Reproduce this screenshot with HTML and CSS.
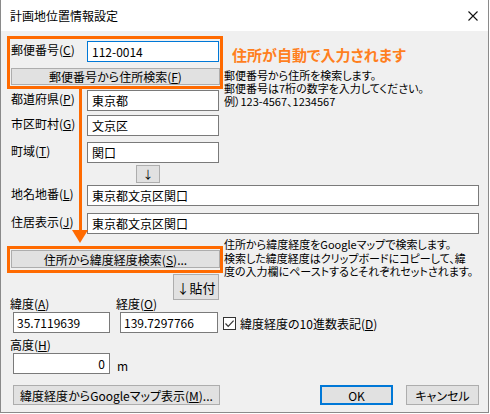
FILE: index.html
```html
<!doctype html>
<html lang="ja">
    <head>
        <meta charset="utf-8">
        <title>計画地位置情報設定</title>
        <link rel="stylesheet" href="styles.css">
    </head>
    <body>
        <div class="window">
            <div class="titlebar">
                <span class="title">計画地位置情報設定</span>
                <svg class="close" width="10" height="10" viewBox="0 0 10 10">
                    <path d="M0.5 0.5 L9.5 9.5 M9.5 0.5 L0.5 9.5" stroke="#111" stroke-width="1.1" fill="none"/>
                </svg>
            </div>
            <div class="content">
                <div class="top">
                    <div class="col-left">
                        <div class="row">
                            <label class="lbl">郵便番号(<u>C</u>)</label>
                            <input class="field field--focus" type="text" value="112-0014">
                        </div>
                        <button class="btn btn-zip">郵便番号から住所検索(<u>F</u>)</button>
                        <div class="row row-pref">
                            <label class="lbl">都道府県(<u>P</u>)</label>
                            <input class="field" type="text" value="東京都">
                        </div>
                        <div class="row row-city">
                            <label class="lbl">市区町村(<u>G</u>)</label>
                            <input class="field" type="text" value="文京区">
                        </div>
                        <div class="row row-town">
                            <label class="lbl">町域(<u>T</u>)</label>
                            <input class="field" type="text" value="関口">
                        </div>
                    </div>
                    <div class="col-right">
                        <p class="notice">住所が自動で入力されます</p>
                        <p class="info info-zip">郵便番号から住所を検索します。<br>郵便番号は7桁の数字を入力してください。<br>例）123-4567、1234567</p>
                    </div>
                </div>
                <button class="btn btn-copy">↓</button>
                <div class="row row-lot">
                    <label class="lbl">地名地番(<u>L</u>)</label>
                    <input class="field field--wide" type="text" value="東京都文京区関口">
                </div>
                <div class="row row-house">
                    <label class="lbl">住居表示(<u>J</u>)</label>
                    <input class="field field--wide" type="text" value="東京都文京区関口">
                </div>
                <div class="geo">
                    <div class="geo-left">
                        <button class="btn btn-geo">住所から緯度経度検索(<u>S</u>)...</button>
                        <button class="btn btn-paste">↓貼付</button>
                    </div>
                    <p class="info info-geo">住所から緯度経度をGoogleマップで検索します。<br>検索した緯度経度はクリップボードにコピーして、緯<br>度の入力欄にペーストするとそれぞれセットされます。</p>
                </div>
                <div class="coords">
                    <div class="coord coord-lat">
                        <label class="coord-lbl">緯度(<u>A</u>)</label>
                        <input class="field field--num" type="text" value="35.7119639">
                    </div>
                    <div class="coord coord-lon">
                        <label class="coord-lbl">経度(<u>O</u>)</label>
                        <input class="field field--num" type="text" value="139.7297766">
                    </div>
                    <label class="check">
                        <span class="check-box">
                            <svg width="11" height="11" viewBox="0 0 11 11"><path d="M1.5 5.5 L4.2 8.3 L9.6 2.6" stroke="#333" stroke-width="1.2" fill="none"/></svg>
                        </span>
                        緯度経度の10進数表記(<u>D</u>)
                    </label>
                </div>
                <div class="coord coord-alt">
                    <label class="coord-lbl">高度(<u>H</u>)</label>
                    <div class="alt-row">
                        <input class="field field--num field--right" type="text" value="0">
                        <span class="unit">m</span>
                    </div>
                </div>
                <div class="actions">
                    <button class="btn btn-map">緯度経度からGoogleマップ表示(<u>M</u>)...</button>
                    <button class="btn btn-ok">OK</button>
                    <button class="btn btn-cancel">キャンセル</button>
                </div>
            </div>
            <div class="mark mark-zip"></div>
            <div class="mark mark-geo"></div>
            <div class="arrow-line"></div>
            <div class="arrow-head"></div>
        </div>
    </body>
</html>
```

FILE: styles.css
```css
* {
    box-sizing: border-box;
}
body {
    margin: 0;
    background: #fff;
    color: #000;
    font-family: "Noto Sans CJK JP", "Noto Sans", sans-serif;
    font-size: 12px;
    font-feature-settings: "palt";
}
.window {
    position: relative;
    width: 489px;
    height: 413px;
    background: #f0f0f0;
    border: 1px solid #8a8a8a;
    border-top: 0;
}
.titlebar {
    height: 31px;
    background: #fff;
    display: flex;
    align-items: center;
    padding-left: 9px;
}
.title {
    line-height: 15px;
}
.close {
    margin-left: auto;
    margin-right: 10px;
}
.content {
    padding: 10px 9px 0 10px;
}
.top {
    display: flex;
}
.col-left {
    width: 209px;
}
.col-right {
    margin-left: 4px;
}
.row {
    display: flex;
}
.lbl {
    width: 76px;
    line-height: 15px;
    padding-top: 1px;
    white-space: nowrap;
}
.field {
    height: 21px;
    width: 132px;
    border: 1px solid #7a7a7a;
    background: #fff;
    padding: 0 4px;
    font: inherit;
    font-feature-settings: inherit;
    color: #000;
    outline: none;
}
.field--focus {
    border-color: #0078d7;
}
.field--wide {
    flex: 1;
}
.field--num {
    width: 100%;
    padding: 0 3px;
}
.field--right {
    text-align: right;
    padding-right: 4px;
}
.btn {
    font: inherit;
    font-feature-settings: inherit;
    color: #000;
    background: #e1e1e1;
    border: 1px solid #adadad;
    padding: 0;
    line-height: 15px;
}
.btn-zip {
    display: block;
    width: 209px;
    height: 17px;
    margin-top: 6px;
}
.row-pref {
    margin-top: 5px;
}
.row-city {
    margin-top: 4px;
}
.row-town {
    margin-top: 6px;
}
.notice {
    margin: 4px 0 0 8px;
    line-height: 20px;
    font-size: 15px;
    font-weight: bold;
    color: #ff7f1e;
    white-space: nowrap;
}
.info {
    margin: 0;
    font-size: 11px;
    line-height: 13px;
    white-space: nowrap;
}
.info-zip {
    margin-top: 4px;
}
.btn-copy {
    display: block;
    width: 24px;
    height: 18px;
    margin: 2px 0 0 125px;
    font-size: 11px;
}
.row-lot {
    margin-top: 2px;
}
.row-house {
    margin-top: 7px;
}
.geo {
    display: flex;
    margin-top: 4px;
}
.geo-left {
    width: 209px;
    flex: none;
    display: flex;
    flex-direction: column;
    align-items: flex-end;
}
.btn-geo {
    width: 209px;
    height: 18px;
    margin-top: 12px;
}
.btn-paste {
    width: 46px;
    height: 26px;
    margin: 6px 1px 0 0;
    font-size: 13px;
}
.info-geo {
    margin-left: 4px;
    line-height: 13.5px;
}
.coords {
    display: flex;
    margin-top: -4px;
}
.coord-lbl {
    display: block;
    line-height: 15px;
    margin-bottom: 1px;
    white-space: nowrap;
}
.coord-lat {
    width: 97px;
    margin-left: 2px;
}
.coord-lat .coord-lbl,
.coord-alt .coord-lbl {
    margin-left: -3px;
}
.coord-lon {
    width: 98px;
    margin-left: 10px;
}
.coord-lon .coord-lbl {
    margin-left: -4px;
}
.check {
    display: flex;
    align-items: center;
    align-self: flex-end;
    margin: 0 0 2px 5px;
    line-height: 15px;
    white-space: nowrap;
}
.check-box {
    width: 13px;
    height: 13px;
    border: 1px solid #333;
    background: #fff;
    margin-right: 4px;
    display: flex;
}
.coord-alt {
    margin: 4px 0 0 2px;
}
.alt-row {
    display: flex;
    align-items: center;
}
.alt-row .field {
    width: 97px;
}
.unit {
    margin-left: 7px;
    padding-top: 3px;
}
.actions {
    display: flex;
    margin-top: 11px;
}
.btn-map {
    width: 207px;
    height: 20px;
    margin-left: 2px;
}
.btn-ok {
    width: 73px;
    height: 20px;
    margin-left: auto;
    border: 2px solid #0078d7;
}
.btn-cancel {
    width: 73px;
    height: 20px;
    margin-left: 13px;
}
.mark {
    position: absolute;
    left: 6px;
    width: 216px;
    border: 3px solid #ff6a00;
    pointer-events: none;
}
.mark-zip {
    top: 36px;
    height: 53px;
}
.mark-geo {
    top: 246px;
    height: 27px;
}
.arrow-line {
    position: absolute;
    left: 78px;
    top: 89px;
    width: 3px;
    height: 142px;
    background: #ff6a00;
}
.arrow-head {
    position: absolute;
    left: 71px;
    top: 230px;
    width: 0;
    height: 0;
    border-left: 8px solid transparent;
    border-right: 8px solid transparent;
    border-top: 13px solid #ff6a00;
}
```
